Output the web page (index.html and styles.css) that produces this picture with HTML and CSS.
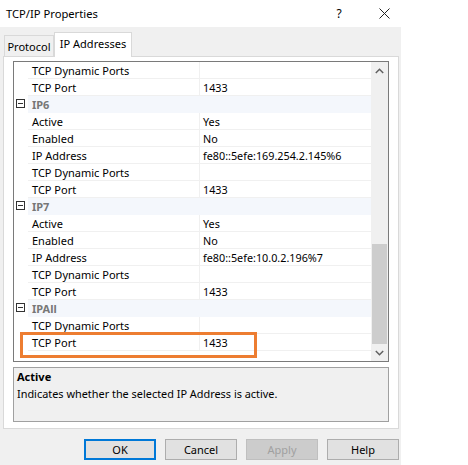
FILE: index.html
```html
<!DOCTYPE html>
<html>
<head>
<meta charset="utf-8">
<link rel="stylesheet" href="styles.css">
</head>
<body>
<div class="titlebar">
  <span class="title">TCP/IP Properties</span>
  <span class="cap-btn help">?</span>
  <span class="cap-btn close">
    <svg width="11" height="11" viewBox="0 0 11 11"><path d="M0.5 0.5L10.5 10.5M10.5 0.5L0.5 10.5" stroke="#222" stroke-width="1" fill="none"/></svg>
  </span>
</div>
<div class="dialog">
  <div class="tabs">
    <div class="tab">Protocol</div>
    <div class="tab selected">IP Addresses</div>
  </div>
  <div class="tabpage">
    <div class="grid">
      <div class="props">
        <div class="row"><span class="gutter"></span><span class="name">TCP Dynamic Ports</span><span class="value"></span></div>
        <div class="row"><span class="gutter"></span><span class="name">TCP Port</span><span class="value">1433</span></div>
        <div class="row cat"><span class="gutter"><i class="minus"></i></span><span class="catname">IP6</span></div>
        <div class="row"><span class="gutter"></span><span class="name">Active</span><span class="value">Yes</span></div>
        <div class="row"><span class="gutter"></span><span class="name">Enabled</span><span class="value">No</span></div>
        <div class="row"><span class="gutter"></span><span class="name">IP Address</span><span class="value">fe80::5efe:169.254.2.145%6</span></div>
        <div class="row"><span class="gutter"></span><span class="name">TCP Dynamic Ports</span><span class="value"></span></div>
        <div class="row"><span class="gutter"></span><span class="name">TCP Port</span><span class="value">1433</span></div>
        <div class="row cat"><span class="gutter"><i class="minus"></i></span><span class="catname">IP7</span></div>
        <div class="row"><span class="gutter"></span><span class="name">Active</span><span class="value">Yes</span></div>
        <div class="row"><span class="gutter"></span><span class="name">Enabled</span><span class="value">No</span></div>
        <div class="row"><span class="gutter"></span><span class="name">IP Address</span><span class="value">fe80::5efe:10.0.2.196%7</span></div>
        <div class="row"><span class="gutter"></span><span class="name">TCP Dynamic Ports</span><span class="value"></span></div>
        <div class="row"><span class="gutter"></span><span class="name">TCP Port</span><span class="value">1433</span></div>
        <div class="row cat"><span class="gutter"><i class="minus"></i></span><span class="catname">IPAll</span></div>
        <div class="row"><span class="gutter"></span><span class="name">TCP Dynamic Ports</span><span class="value"></span></div>
        <div class="row"><span class="gutter"></span><span class="name">TCP Port</span><span class="value">1433</span></div>
      </div>
      <div class="scrollbar">
        <div class="arrow">
          <svg width="9" height="6" viewBox="0 0 9 6"><path d="M0.8 5L4.5 1.3L8.2 5" stroke="#606060" stroke-width="1.5" fill="none"/></svg>
        </div>
        <div class="track"><div class="thumb"></div></div>
        <div class="arrow">
          <svg width="9" height="6" viewBox="0 0 9 6"><path d="M0.8 1L4.5 4.7L8.2 1" stroke="#606060" stroke-width="1.5" fill="none"/></svg>
        </div>
      </div>
      <div class="highlight"></div>
    </div>
    <div class="desc">
      <div class="desc-title">Active</div>
      <div class="desc-text">Indicates whether the selected IP Address is active.</div>
    </div>
  </div>
  <div class="buttons">
    <button class="btn default">OK</button>
    <button class="btn">Cancel</button>
    <button class="btn disabled">Apply</button>
    <button class="btn">Help</button>
  </div>
</div>
</body>
</html>
```
FILE: styles.css
```css
html, body {
  margin: 0;
  padding: 0;
  background: #ffffff;
  font-family: "Noto Sans", "Liberation Sans", sans-serif;
  font-size: 11px;
  color: #000;
}

.titlebar {
  height: 27px;
  display: flex;
  align-items: center;
  background: #fff;
}
.title {
  padding-left: 6px;
  font-size: 11.2px;
  flex: 1;
}
.cap-btn {
  display: flex;
  justify-content: center;
  align-items: center;
  height: 27px;
}
.help {
  width: 46px;
  font-size: 12px;
  padding-left: 2px;
}
.close {
  width: 44px;
  margin-right: 62px;
}

.dialog {
  width: 401px;
  height: 438px;
  background: #f0f0f0;
}

.tabs {
  height: 29px;
  display: flex;
  align-items: flex-end;
  padding-left: 4px;
  position: relative;
  z-index: 2;
}
.tab {
  box-sizing: border-box;
  height: 21px;
  width: 50px;
  border: 1px solid #d9d9d9;
  border-bottom: none;
  display: flex;
  align-items: center;
  justify-content: center;
  background: #f0f0f0;
  padding-top: 1px;
}
.tab.selected {
  height: 25px;
  width: 78px;
  background: #ffffff;
  margin-bottom: -1px;
  padding-top: 0;
  padding-bottom: 3px;
}

.tabpage {
  position: relative;
  z-index: 1;
  margin-left: 3px;
  width: 396px;
  height: 373px;
  box-sizing: border-box;
  border: 1px solid #d9d9d9;
  background: #ffffff;
  padding: 4px 9px 6px 9px;
}

.grid {
  position: relative;
  box-sizing: border-box;
  width: 376px;
  height: 301px;
  border: 1px solid #7a7a7a;
  display: flex;
  background: #fff;
}
.props {
  flex: 1;
  overflow: hidden;
}
.row {
  display: flex;
  height: 17px;
  line-height: 16px;
}
.gutter {
  width: 14px;
  flex: none;
  position: relative;
}
.name {
  box-sizing: border-box;
  width: 172px;
  flex: none;
  padding: 1px 0 0 4px;
  border-right: 1px solid #f0f0f0;
  border-bottom: 1px solid #f0f0f0;
  white-space: nowrap;
}
.value {
  box-sizing: border-box;
  flex: 1;
  padding: 1px 0 0 3px;
  border-bottom: 1px solid #f0f0f0;
  white-space: nowrap;
  font-size: 10.8px;
}
.catname {
  flex: 1;
  background: #f4f7fc;
  padding: 1px 0 0 4px;
  color: #777777;
  font-weight: 700;
}
.minus {
  position: absolute;
  left: 2px;
  top: 3px;
  width: 9px;
  height: 9px;
  box-sizing: border-box;
  border: 1px solid #333;
  background: #fff;
}
.minus::after {
  content: "";
  position: absolute;
  left: 1px;
  right: 1px;
  top: 3px;
  height: 1px;
  background: #333;
}

.scrollbar {
  width: 17px;
  flex: none;
  display: flex;
  flex-direction: column;
  background: #f0f0f0;
}
.arrow {
  height: 17px;
  display: flex;
  align-items: center;
  justify-content: center;
}
.track {
  flex: 1;
  display: flex;
  flex-direction: column;
  justify-content: flex-end;
}
.thumb {
  height: 100px;
  margin: 0 1px;
  background: #cdcdcd;
}

.highlight {
  position: absolute;
  left: 6px;
  top: 270px;
  width: 237px;
  height: 26px;
  box-sizing: border-box;
  border: 3px solid #ed7d31;
}

.desc {
  margin-top: 5px;
  box-sizing: border-box;
  height: 55px;
  border: 1px solid #a0a0a0;
  background: #f0f0f0;
  padding: 0 3px;
  line-height: 17px;
}
.desc-title {
  font-weight: 700;
}
.desc-text {
  font-size: 10.9px;
}

.buttons {
  display: flex;
  gap: 9px;
  padding: 10px 0 0 84px;
}
.btn {
  box-sizing: border-box;
  width: 72px;
  height: 21px;
  border: 1px solid #adadad;
  background: #e1e1e1;
  font-family: inherit;
  font-size: 11px;
  color: #000;
  padding: 0;
}
.btn.default {
  border: 2px solid #0078d7;
}
.btn.disabled {
  background: #cccccc;
  border-color: #bfbfbf;
  color: #a0a0a0;
}
```
